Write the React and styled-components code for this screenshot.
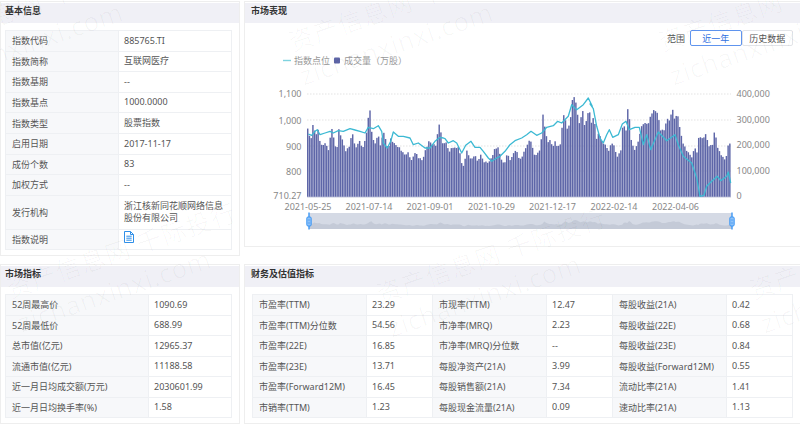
import styled, { createGlobalStyle } from 'styled-components';

const GlobalStyle = createGlobalStyle`
  html, body {
    margin: 0;
    background: #fff;
  }
  body {
    font-family: "Noto Sans", "Noto Sans CJK SC", sans-serif;
    font-size: 9px;
    color: #555;
  }
`;

const Page = styled.div`
  position: relative;
  width: 800px;
  height: 426px;
  overflow: hidden;
  display: grid;
  grid-template-columns: 240px 1fr;
  grid-template-rows: 264px 160px;
  column-gap: 4px;
`;

const Panel = styled.section`
  box-sizing: border-box;
  border: 1px solid #eeeeee;
  border-right-width: ${(p) => (p.$open ? 0 : 1)}px;
  padding-top: 1px;
  height: ${(p) => p.$h}px;
  margin-top: ${(p) => p.$top}px;
  background: #fff;
`;

const Header = styled.h2`
  margin: 0;
  height: ${(p) => p.$h}px;
  line-height: 16px;
  padding-left: ${(p) => (p.$wide ? 6 : 4)}px;
  background: #f0f0f6;
  font-size: 9px;
  font-weight: 700;
  color: #333;
`;

const Body = styled.div`
  padding: ${(p) => p.$top}px 7px 0 4px;
`;

const WideBody = styled(Body)`
  padding-left: 7px;
`;

const Table = styled.table`
  border-collapse: collapse;
  table-layout: fixed;
  width: ${(p) => p.$w}px;
  font-size: 9px;
`;

const Col = styled.col`
  width: ${(p) => p.$w}px;
`;

const Row = styled.tr`
  height: ${(p) => p.$h || 20.6}px;
`;

const Label = styled.td`
  padding: 0 5px 0 6px;
  background: #f7f8fa;
  border: 1px solid #eef0f3;
  white-space: nowrap;
`;

const Value = styled.td`
  padding: 0 5px 0 5.5px;
  line-height: 12.5px;
  border: 1px solid #eef0f3;
`;

const DocIcon = styled.svg`
  display: block;
  margin-top: -5px;
  width: 10px;
  height: 12px;
`;

const Toolbar = styled.div`
  display: flex;
  align-items: center;
  justify-content: flex-end;
  padding: 7px 7px 0 0;
  height: 16px;
`;

const RangeLabel = styled.span`
  margin-right: -5px;
  width: 28px;
  color: #555;
`;

const RangeButton = styled.button`
  box-sizing: border-box;
  width: 51.5px;
  height: 16px;
  padding: 0;
  font: inherit;
  font-size: 9px;
  background: #fff;
  color: ${(p) => (p.$active ? '#2f6fe0' : '#555')};
  border: 1px solid ${(p) => (p.$active ? '#5f94ee' : '#e2e4e8')};
  border-radius: 2px;
`;

const Chart = styled.svg`
  display: block;
  width: 555px;
  height: 190px;
  margin-top: 4px;
  font-family: "Noto Sans", "Noto Sans CJK SC", sans-serif;
  font-size: 9px;
`;

const Watermark = styled.div`
  position: absolute;
  left: ${(p) => p.$x}px;
  top: ${(p) => p.$y}px;
  transform: rotate(-19deg);
  transform-origin: 0 0;
  pointer-events: none;
  white-space: nowrap;
  color: rgba(0, 0, 0, 0.028);
`;

const MarkCn = styled.div`
  font-size: 25px;
  line-height: 30px;
  letter-spacing: 1px;
`;

const MarkEn = styled.div`
  font-size: 26px;
  line-height: 36px;
  margin-top: 3px;
  letter-spacing: 0.5px;
`;

const BASIC = [
  ['指数代码', '885765.TI'],
  ['指数简称', '互联网医疗'],
  ['指数基期', '--'],
  ['指数基点', '1000.0000'],
  ['指数类型', '股票指数'],
  ['启用日期', '2017-11-17'],
  ['成份个数', '83'],
  ['加权方式', '--'],
  ['发行机构', '浙江核新同花顺网络信息股份有限公司', 34],
];

const MARKET = [
  ['52周最高价', '1090.69'],
  ['52周最低价', '688.99'],
  ['总市值(亿元)', '12965.37'],
  ['流通市值(亿元)', '11188.58'],
  ['近一月日均成交额(万元)', '2030601.99'],
  ['近一月日均换手率(%)', '1.58'],
];

const FINANCE = [
  ['市盈率(TTM)', '23.29', '市现率(TTM)', '12.47', '每股收益(21A)', '0.42'],
  ['市盈率(TTM)分位数', '54.56', '市净率(MRQ)', '2.23', '每股收益(22E)', '0.68'],
  ['市盈率(22E)', '16.85', '市净率(MRQ)分位数', '--', '每股收益(23E)', '0.84'],
  ['市盈率(23E)', '13.71', '每股净资产(21A)', '3.99', '每股收益(Forward12M)', '0.55'],
  ['市盈率(Forward12M)', '16.45', '每股销售额(21A)', '7.34', '流动比率(21A)', '1.41'],
  ['市销率(TTM)', '1.23', '每股现金流量(21A)', '0.09', '速动比率(21A)', '1.13'],
];

// chart outline read off the screenshot: pairs of x, y in crops taken at 3x
const crop = (ox, list) => {
  const out = [];
  for (let i = 0; i < list.length; i += 2) out.push([ox + list[i] / 3, 88 + list[i + 1] / 3]);
  return out;
};

const BAR_TOPS = [
  ...crop(300, [20,118,30,155,38,100,45,145,52,122,60,170,75,165,85,185,92,110,100,155,108,190,113,118,125,155,135,185,145,175,155,132,165,180,175,155,185,178,195,150,207,55,215,150,225,165,232,135,240,172,248,125,255,155,262,180,270,150,280,165,295,175,310,198,325,190,330,222,345,185,350,205,365,215,372,190,385,158,395,165,405,170,417,98,425,165]),
  ...crop(445, [0,160,10,188,20,175,30,180,40,170,45,215,55,238,62,178,70,205,80,212,88,195,95,218,105,200,115,218,130,222,140,200,148,178,157,178,165,205,175,228,185,195,195,215,205,188,215,190,222,215,232,198,240,178,248,158,255,155,265,198,275,195,285,178,292,75,298,118,305,160,315,155,320,175,330,155,335,178,345,165,352,75,360,95,365,125,373,100,380,35,387,20,395,75,403,110,410,55,418,125,425,70,432,72]),
  ...crop(590, [0,105,10,85,18,150,25,130,35,165,45,165,52,190,60,170,68,160,78,205,90,190,97,95,105,135,113,42,120,145,130,185,140,170,148,130,155,105,163,105,172,105,182,75,190,65,200,70,210,125,220,125,228,90,238,95,245,58,253,95,260,70,268,125,278,165,290,190,305,205,312,170,318,200,325,138,335,150,345,138,355,170,365,170,372,125,382,180,395,205,405,215,410,175,418,162,422,165]),
];

const PRICE_LINE = [
  ...crop(300, [25,138,35,142,45,130,52,125,60,140,75,135,90,130,100,135,115,128,130,130,150,122,165,126,180,130,195,135,205,118,220,122,235,113,245,130,250,165,262,180,272,160,280,132,295,145,310,145,330,150,340,170,355,165,375,180,390,180,405,160,420,148,430,150]),
  ...crop(445, [0,152,10,165,25,158,35,165,50,195,62,172,78,160,90,178,105,178,115,190,130,210,140,220,155,210,165,205,180,190,195,170,210,158,230,150,245,140,258,130,275,142,290,135,305,118,325,113,338,100,350,105,370,85,380,50,395,65,415,50,430,30,442,55]),
  ...crop(590, [0,48,10,62,20,115,30,150,40,165,50,140,58,125,68,148,85,140,97,108,108,100,118,125,135,118,148,118,160,170,170,140,182,185,205,132,230,158,255,140,265,170,280,205,305,225,320,270,330,325,342,322,350,295,365,280,382,265,392,278,410,265,415,252,422,285]),
];

const BASE_Y = 197;
const BAR_STEP = 1.73;

const topAt = (x) => {
  let i = 1;
  while (i < BAR_TOPS.length - 1 && BAR_TOPS[i][0] < x) i += 1;
  const [x0, y0] = BAR_TOPS[i - 1];
  const [x1, y1] = BAR_TOPS[i];
  const t = Math.min(1, Math.max(0, (x - x0) / (x1 - x0)));
  return y0 + (y1 - y0) * t;
};

const BARS = Array.from({ length: 245 }, (_, i) => {
  const x = 307 + i * BAR_STEP;
  return { x, top: topAt(x) + ((i * 7) % 5) * 0.4 };
});

const MINI_AREA = `M309 229 ${BARS.map((b) => `L${b.x + 2} ${(229 - (BASE_Y - b.top) * 0.09).toFixed(1)}`).join(' ')} L732 229 Z`;

const GRID = [94, 120, 146, 171];
const LEFT_TICKS = [['1,100', 94], ['1,000', 120.5], ['900', 146.5], ['800', 172], ['710.27', 196]];
const RIGHT_TICKS = [['400,000', 94], ['300,000', 119.5], ['200,000', 145], ['100,000', 170.5], ['0', 196]];
const DATES = [['2021-05-25', 308], ['2021-07-14', 369], ['2021-09-01', 430], ['2021-10-29', 491.5], ['2021-12-17', 552.5], ['2022-02-14', 614], ['2022-04-06', 675.5]];
const MARKS = [[-86, 28], [284, 28], [654, 28], [2, 275], [372, 280], [745, 276]];

function Handle({ x }) {
  return (
    <g>
      <rect x={x - 0.7} y="212.5" width="1.4" height="17" fill="#3d97f5" />
      <rect x={x - 2.2} y="217" width="4.4" height="9" rx="1.2" fill="#8fc2f8" stroke="#3d97f5" strokeWidth="1" />
      <path d={`M${x - 1.2} 220h2.4M${x - 1.2} 223h2.4`} stroke="#3d97f5" strokeWidth="0.7" />
    </g>
  );
}

function MarketChart() {
  return (
    <Chart viewBox="245 50 555 190">
      <path d="M283 60.5h8" stroke="#7fd3df" strokeWidth="1.4" />
      <text x="294" y="63.5" fill="#999">指数点位</text>
      <rect x="334" y="57.5" width="6" height="6" rx="1" fill="#5d65a6" />
      <text x="344" y="63.5" fill="#999">成交量（万股）</text>

      {GRID.map((y) => (
        <path key={y} d={`M307 ${y}H731`} stroke="#dcdcdc" strokeWidth="0.8" strokeDasharray="1.5 1.5" />
      ))}
      {LEFT_TICKS.map(([t, y]) => (
        <text key={t} x="301.5" y={y + 3} textAnchor="end" fill="#888">{t}</text>
      ))}
      {RIGHT_TICKS.map(([t, y]) => (
        <text key={t} x="736.5" y={y + 3} fill="#888">{t}</text>
      ))}
      {DATES.map(([t, x]) => (
        <text key={t} x={x} y="209.5" textAnchor="middle" fill="#888">{t}</text>
      ))}

      {BARS.map((b) => (
        <rect key={b.x} x={b.x} y={b.top} width="1.45" height={BASE_Y - b.top} fill="#5e66a8" />
      ))}
      <path d={`M307 ${BASE_Y}H731`} stroke="#b5b9d3" strokeWidth="0.8" />
      <polyline
        points={PRICE_LINE.map((p) => p.map((v) => v.toFixed(1)).join(',')).join(' ')}
        fill="none"
        stroke="#3cb9d3"
        strokeWidth="1.3"
        strokeLinejoin="round"
      />

      <rect x="309" y="213" width="423" height="16" fill="#d5dae5" />
      <path d={MINI_AREA} fill="#c4cad7" />
      <Handle x={309} />
      <Handle x={732} />
    </Chart>
  );
}

function App() {
  return (
    <>
      <GlobalStyle />
      <Page>
        <Panel $h={255} $top={1}>
          <Header $h={20}>基本信息</Header>
          <Body $top={7}>
            <Table $w={226}>
              <colgroup>
                <Col $w={112.5} />
                <Col $w={113.5} />
              </colgroup>
              <tbody>
                {BASIC.map(([k, v, h]) => (
                  <Row key={k} $h={h}>
                    <Label>{k}</Label>
                    <Value>{v}</Value>
                  </Row>
                ))}
                <Row>
                  <Label>指数说明</Label>
                  <Value>
                    <DocIcon viewBox="0 0 10 12" fill="none" stroke="#2f8fe8" strokeWidth="1">
                      <path d="M.5.5H6.5L9.5 3.5V11.5H.5Z" />
                      <path d="M6.5.5V3.5H9.5M2.3 5.2H7.7M2.3 7.2H7.7M2.3 9.2H7.7" />
                    </DocIcon>
                  </Value>
                </Row>
              </tbody>
            </Table>
          </Body>
        </Panel>

        <Panel $h={246} $top={1} $open>
          <Header $h={20} $wide>
            市场表现
          </Header>
          <Toolbar>
            <RangeLabel>范围</RangeLabel>
            <RangeButton $active>近一年</RangeButton>
            <RangeButton>历史数据</RangeButton>
          </Toolbar>
          <MarketChart />
        </Panel>

        <Panel $h={160} $top={0}>
          <Header $h={21}>市场指标</Header>
          <Body $top={7}>
            <Table $w={226}>
              <colgroup>
                <Col $w={142.5} />
                <Col $w={83.5} />
              </colgroup>
              <tbody>
                {MARKET.map(([k, v]) => (
                  <Row key={k} $h={20.5}>
                    <Label>{k}</Label>
                    <Value>{v}</Value>
                  </Row>
                ))}
              </tbody>
            </Table>
          </Body>
        </Panel>

        <Panel $h={160} $top={0} $open>
          <Header $h={21} $wide>财务及估值指标</Header>
          <WideBody $top={7}>
            <Table $w={540}>
              <colgroup>
                {[113.5, 66.5, 113.5, 66.5, 113.5, 66.5].map((w, i) => (
                  <Col key={i} $w={w} />
                ))}
              </colgroup>
              <tbody>
                {FINANCE.map((r) => (
                  <Row key={r[0]} $h={20.5}>
                    <Label>{r[0]}</Label>
                    <Value>{r[1]}</Value>
                    <Label>{r[2]}</Label>
                    <Value>{r[3]}</Value>
                    <Label>{r[4]}</Label>
                    <Value>{r[5]}</Value>
                  </Row>
                ))}
              </tbody>
            </Table>
          </WideBody>
        </Panel>

        {MARKS.map(([x, y]) => (
          <Watermark key={`${x}-${y}`} $x={x} $y={y}>
            <MarkCn>资产信息网 千际投行</MarkCn>
            <MarkEn>zichanxinxi.com</MarkEn>
          </Watermark>
        ))}
      </Page>
    </>
  );
}

export default App;
